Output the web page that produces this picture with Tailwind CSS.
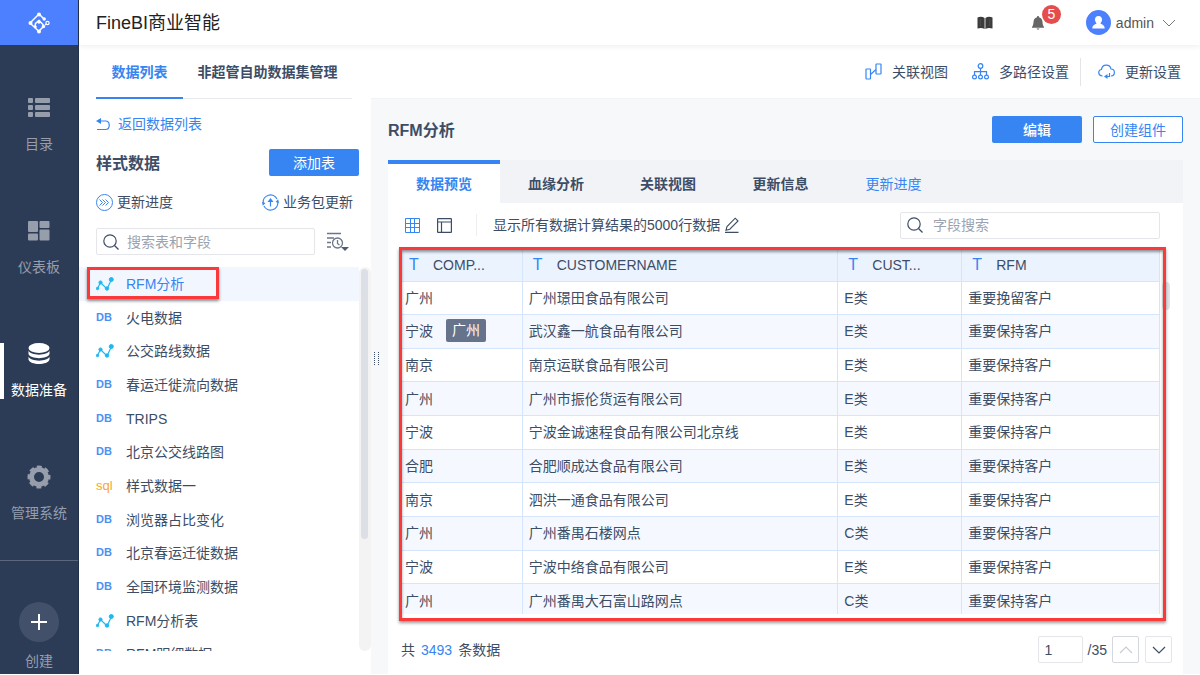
<!DOCTYPE html>
<html lang="zh-CN">
<head>
    <meta charset="UTF-8">
    <meta name="viewport" content="width=device-width, initial-scale=1.0">
    <title>FineBI商业智能</title>
    <script src="https://cdn.jsdelivr.net/npm/@tailwindcss/browser@4"></script>
    <style> body { font-family: 'Liberation Sans', 'Noto Sans CJK SC', sans-serif; } </style>
</head>
<body class="h-screen pb-px flex overflow-hidden bg-white text-sm text-[#3d4d66]">

    <!-- SIDEBAR -->
    <aside class="w-[79px] shrink-0 flex flex-col bg-[#2c3b56] border-r border-[#22304c] text-[#969eac]">
        <a href="#" aria-label="首页" class="h-[45px] shrink-0 flex items-center justify-center bg-[#4c80ff]">
            <svg class="w-[22px] h-[22px]" viewBox="0 0 22 22" fill="none" stroke="#fff" stroke-width="1.5">
                <path d="M10 3L3 10M3 12L11 19.500M12 3L16 7M17 13L19.500 11M7 14.500L7.500 11.500L11 8.500L15 12.500V15L11 19"/>
                <g fill="#fff" stroke="none">
                    <circle cx="11" cy="2.500" r="2"/><circle cx="2.500" cy="11" r="2"/><circle cx="11" cy="19.500" r="2"/>
                    <circle cx="16.200" cy="7" r="1.700"/><circle cx="7.300" cy="14.800" r="1.500"/><circle cx="11" cy="10" r="1.700"/><circle cx="15.500" cy="14.500" r="1.700"/>
                </g>
                <circle cx="19.500" cy="11" r="1.600" fill="#4c80ff" stroke-width="1.200"/>
            </svg>
        </a>
        <nav class="h-[516px] shrink-0 pt-[18px] pb-1 flex flex-col border-b border-[#5a667b]">
            <a href="#" class="flex-1 flex flex-col items-center justify-center gap-3.5">
                <svg class="w-6 h-6" viewBox="0 0 24 24" fill="currentColor">
                    <rect x="1" y="2" width="5" height="5" rx="1"/><rect x="8" y="2" width="15" height="5" rx="1"/>
                    <rect x="1" y="9" width="5" height="5" rx="1"/><rect x="8" y="9" width="15" height="5" rx="1"/>
                    <rect x="1" y="16" width="5" height="5" rx="1"/><rect x="8" y="16" width="15" height="5" rx="1"/>
                </svg>
                <span class="leading-5">目录</span>
            </a>
            <a href="#" class="flex-1 flex flex-col items-center justify-center gap-3.5">
                <svg class="w-6 h-6" viewBox="0 0 24 24" fill="currentColor">
                    <rect x="1" y="2" width="10" height="11" rx="1"/><rect x="12.500" y="2" width="10" height="7" rx="1"/>
                    <rect x="1" y="14.500" width="10" height="7" rx="1"/><rect x="12.500" y="10.500" width="10" height="11" rx="1"/>
                </svg>
                <span class="leading-5">仪表板</span>
            </a>
            <a href="#" class="relative flex-1 flex flex-col items-center justify-center gap-3.5 text-white">
                <span class="absolute left-0 top-1/2 -translate-y-1/2 w-1 h-14 bg-white"></span>
                <svg class="w-6 h-6" viewBox="0 0 24 24" fill="currentColor">
                    <ellipse cx="12" cy="6" rx="10.500" ry="5"/>
                    <path d="M1.500 8.500C3 14 21 14 22.500 8.500V12C21 17.500 3 17.500 1.500 12Z"/>
                    <path d="M1.500 14.500C3 20 21 20 22.500 14.500V17.500C21 23.500 3 23.500 1.500 17.500Z"/>
                </svg>
                <span class="leading-5">数据准备</span>
            </a>
            <a href="#" class="flex-1 flex flex-col items-center justify-center gap-3.5">
                <svg class="w-6 h-6" viewBox="0 0 24 24">
                    <circle cx="12" cy="12" r="7.500" fill="none" stroke="currentColor" stroke-width="5"/>
                    <circle cx="12" cy="12" r="10" fill="none" stroke="currentColor" stroke-width="3" stroke-dasharray="4.800 3.054" stroke-dashoffset="2.400"/>
                </svg>
                <span class="leading-5">管理系统</span>
            </a>
        </nav>
        <button type="button" class="pt-[41px] flex flex-col items-center gap-[9px]">
            <span class="w-10 h-10 rounded-full bg-[#435069] flex items-center justify-center">
                <svg class="w-4 h-4" viewBox="0 0 16 16" stroke="#fff" stroke-width="2"><path d="M8 0V16M0 8H16"/></svg>
            </span>
            <span class="leading-5">创建</span>
        </button>
    </aside>

    <div class="flex-1 min-w-0 flex flex-col">
        <!-- HEADER -->
        <header class="relative h-[45px] shrink-0 pl-[17px] pr-6 flex items-center bg-white shadow-[0_1px_6px_rgba(0,0,0,0.08)]">
            <h1 class="text-lg text-[#222]">FineBI商业智能</h1>
            <div class="ml-auto flex items-center">
                <button type="button" aria-label="帮助文档">
                    <svg class="w-4 h-4" viewBox="0 0 16 16" fill="#3b3b3b">
                        <path d="M.5 2.500C3 1.300 5.500 1.500 7.600 3V14C5.500 12.700 3 12.600.5 13.600Z"/>
                        <path d="M15.500 2.500C13 1.300 10.500 1.500 8.400 3V14C10.500 12.700 13 12.600 15.500 13.600Z"/>
                        <path d="M3.200 4V11M12.800 4V11" stroke="#666" stroke-width=".5"/>
                    </svg>
                </button>
                <button type="button" aria-label="消息" class="relative ml-[37px]">
                    <svg class="w-4 h-4" viewBox="0 0 16 16" fill="#666">
                        <path d="M8 1C8.700 1 9 1.500 9 2.200C11.500 2.800 12.300 4.800 12.500 7C12.700 9.500 13 10.500 14 12V12.800H2V12C3 10.500 3.300 9.500 3.500 7C3.700 4.800 4.500 2.800 7 2.200C7 1.500 7.300 1 8 1ZM6.500 13.600H9.500C9.300 15 6.700 15 6.500 13.600Z"/>
                    </svg>
                    <span class="absolute left-3 -top-2.5 w-[19px] h-[19px] rounded-full bg-[#e64c4c] text-white text-sm leading-[19px] text-center">5</span>
                </button>
                <button type="button" class="ml-10 flex items-center text-[#555]">
                    <svg class="w-[25px] h-[25px]" viewBox="0 0 25 25">
                        <circle cx="12.500" cy="12.500" r="12.500" fill="#4c80ff"/>
                        <path fill="#fff" d="M12.500 6C15 6 16.200 7.800 16 10C15.900 11.400 15.200 12.500 14.400 13.200C15.500 14.500 18.700 14.600 18.700 18.500H6.300C6.300 14.600 9.500 14.500 10.600 13.200C9.800 12.500 9.100 11.400 9 10C8.800 7.800 10 6 12.500 6Z"/>
                    </svg>
                    <span class="ml-[5px]">admin</span>
                    <svg class="ml-2 w-3.5 h-3.5" viewBox="0 0 14 14" fill="none" stroke="#777"><path d="M1 4L7 10L13 4"/></svg>
                </button>
            </div>
        </header>

        <div class="flex-1 min-h-0 flex">
            <!-- TABLE LIST -->
            <section class="w-[292px] shrink-0 flex flex-col">
                <div class="ml-[17px] mr-[19px] h-[54px] shrink-0 flex border-b border-[#e8eaed] font-bold">
                    <a href="#" class="w-[87px] h-[54px] pt-0.5 flex items-center justify-center border-b-2 border-[#3685f2] text-[#3685f2]">数据列表</a>
                    <a href="#" class="flex-1 flex items-center justify-center whitespace-nowrap">非超管自助数据集管理</a>
                </div>
                <div class="pl-[17px] pr-3 pt-[15px]">
                    <a href="#" class="flex items-center gap-2 leading-5 text-[#3685f2]">
                        <svg class="w-3.5 h-3.5" viewBox="0 0 14 14" fill="none" stroke="currentColor" stroke-width="1.200">
                            <path d="M2 4H9.500C14.500 4 14.500 12.500 9.500 12.500H1"/><path d="M0 4L5 1V7Z" fill="currentColor" stroke="none"/>
                        </svg>
                        返回数据列表
                    </a>
                    <div class="mt-[15px] flex items-center justify-between">
                        <h2 class="pt-0.5 text-base font-bold">样式数据</h2>
                        <button type="button" class="w-[90px] h-[27px] rounded-xs bg-[#3685f2] text-white">添加表</button>
                    </div>
                    <div class="mt-4 pr-1.5 flex justify-between leading-5">
                        <button type="button" class="flex items-center gap-1">
                            <svg class="w-[17px] h-[17px]" viewBox="0 0 17 17" fill="none" stroke="#3685f2">
                                <circle cx="8.500" cy="8.500" r="8"/><path d="M3.500 5.500L6.500 8.500L3.500 11.500M6.500 5.500L9.500 8.500L6.500 11.500M9.500 5.500L12.500 8.500L9.500 11.500"/>
                            </svg>
                            更新进度
                        </button>
                        <button type="button" class="flex items-center gap-1">
                            <svg class="w-[17px] h-[17px]" viewBox="0 0 17 17" fill="none" stroke="#3685f2" stroke-width="1.200">
                                <path d="M1.200 9A7.300 7.300 0 0 1 15 5M15.800 8A7.300 7.300 0 0 1 2 12M8.500 12.500V6"/>
                                <path d="M5.500 8L8.500 4L11.500 8ZM0 8L3.500 9L.8 11.800ZM17 9L13.500 8L16.200 5.200Z" fill="#3685f2" stroke="none"/>
                            </svg>
                            业务包更新
                        </button>
                    </div>
                    <div class="mt-4 flex items-center">
                        <label class="w-[219px] h-[27px] pl-1.5 flex items-center gap-2 border border-[#e4e6ea] rounded-xs">
                            <svg class="w-4 h-4 shrink-0" viewBox="0 0 16 16" fill="none" stroke="#3d4d66" stroke-width="1.200"><circle cx="7" cy="7" r="6.200"/><path d="M11.500 11.500L15.500 15.500"/></svg>
                            <input type="text" aria-label="搜索表和字段" placeholder="搜索表和字段" class="w-full outline-none placeholder:text-[#9ba3b0]">
                        </label>
                        <button type="button" aria-label="排序" class="ml-3">
                            <svg class="w-[22px] h-[19px]" viewBox="0 0 22 19" fill="none" stroke="#6b7687" stroke-width="1.300">
                                <path d="M0 1.500H14M0 6H7M0 10.500H4M0 15H4"/><circle cx="10.500" cy="11" r="5"/><path d="M10.500 8V11.500L12.500 13"/>
                                <path d="M14 15H22L18 19Z" fill="#4d5c75" stroke="none"/>
                            </svg>
                        </button>
                    </div>
                </div>
                <div class="relative mt-3 h-[384px] flex">
                    <ul id="table-list" class="flex-1 h-full overflow-hidden"></ul>
                    <div class="w-3 py-0.5 px-0.5 rounded-md bg-[#f3f3f4]"><div class="w-[7px] h-[270px] rounded-full bg-[#dcdfe5]"></div></div>
                    <div class="absolute left-2 top-0 w-[132px] h-8 border-3 border-[#fa3a3a] shadow-[0_2px_3px_rgba(0,0,0,0.45)] pointer-events-none"></div>
                </div>
            </section>

            <div class="flex-1 min-w-0 flex flex-col">
                <div class="h-[54px] shrink-0 pr-[19px] flex items-center justify-end border-b border-[#f2f3f5]">
                    <a href="#" class="flex items-center gap-2.5">
                        <svg class="w-[17px] h-[17px]" viewBox="0 0 17 17" fill="none" stroke="#3685f2" stroke-width="1.200"><rect x="1" y="6" width="4.500" height="10" rx=".5"/><rect x="11" y="1" width="5" height="10" rx=".5"/><path d="M5.500 11.500L11 6.500"/></svg>
                        关联视图
                    </a>
                    <a href="#" class="ml-6 flex items-center gap-2.5">
                        <svg class="w-[17px] h-[17px]" viewBox="0 0 17 17" fill="none" stroke="#3685f2" stroke-width="1.200"><circle cx="8.500" cy="3" r="2.300"/><circle cx="2.500" cy="14" r="1.900"/><circle cx="8.500" cy="14" r="1.900"/><circle cx="14.500" cy="14" r="1.900"/><path d="M8.500 5.300V12M2.500 12V8.700H14.500V12"/></svg>
                        多路径设置
                    </a>
                    <span class="mx-[11px] w-px h-7 bg-[#e3e5e9]"></span>
                    <a href="#" class="ml-1.5 flex items-center gap-2.5">
                        <svg class="w-[17px] h-[17px]" viewBox="0 0 17 17" fill="none" stroke="#3685f2" stroke-width="1.200"><path d="M4.500 13C-.5 12.500-.2 6.700 3.500 6.500C4.200 .8 12 .8 13 6C17.500 6.200 17.500 12.500 13 13M11.500 10V13.500H8"/><path d="M6 13.500L9.500 11V16Z" fill="#3685f2" stroke="none"/></svg>
                        更新设置
                    </a>
                </div>

                <!-- DATASET DETAIL -->
                <main class="flex-1 min-h-0 relative pl-[17px] pr-[17px] pt-[17px] flex flex-col bg-[#f7f8fa]">
                    <svg class="absolute left-[3px] top-[253px] w-[5px] h-[14px]" viewBox="0 0 5 14" stroke="#3d4d66" stroke-width="1" stroke-dasharray="1 1"><path d="M.5 0V14M4.500 0V14"/></svg>
                    <div class="flex items-center gap-[11px]">
                        <h2 class="mr-auto pt-0.5 text-base font-bold">RFM分析</h2>
                        <button type="button" class="w-[90px] h-[27px] rounded-xs bg-[#3685f2] text-white font-medium">编辑</button>
                        <button type="button" class="w-[90px] h-[27px] rounded-xs border border-[#3685f2] bg-white text-[#3685f2]">创建组件</button>
                    </div>
                    <nav class="mt-[17px] h-[43px] shrink-0 flex bg-[#f2f3f7] font-bold">
                        <a href="#" class="w-28 flex items-center justify-center bg-white border-t-4 border-[#3685f2] text-[#3685f2]">数据预览</a>
                        <a href="#" class="w-28 pt-1 flex items-center justify-center">血缘分析</a>
                        <a href="#" class="w-28 pt-1 flex items-center justify-center">关联视图</a>
                        <a href="#" class="w-[113px] pt-1 flex items-center justify-center">更新信息</a>
                        <a href="#" class="w-[113px] pt-1 flex items-center justify-center font-normal text-[#3685f2]">更新进度</a>
                    </nav>
                    <div class="flex-1 min-h-0 flex flex-col bg-white">
                        <div class="h-[44px] shrink-0 pl-[17px] pr-[23px] flex items-center">
                            <button type="button" aria-label="表格视图">
                                <svg class="w-[15px] h-[15px]" viewBox="0 0 15 15" fill="none" stroke="#3685f2"><path d="M.5.5H14.500V14.500H.5ZM5.500.5V14.500M9.500.5V14.500M.5 5.500H14.500M.5 9.500H14.500"/></svg>
                            </button>
                            <button type="button" aria-label="字段视图" class="ml-[17px]">
                                <svg class="w-[15px] h-[15px]" viewBox="0 0 15 15" fill="none" stroke="#3d4d66" stroke-width="1.200"><rect x=".6" y=".6" width="13.800" height="13.800" rx=".5"/><path d="M.5 4H14.500M4.500 4V14.500"/></svg>
                            </button>
                            <span class="mx-4 ml-6 w-px h-[22px] bg-[#eceef1]"></span>
                            <span class="whitespace-nowrap">显示所有数据计算结果的5000行数据</span>
                            <button type="button" aria-label="编辑行数" class="ml-1">
                                <svg class="w-4 h-4" viewBox="0 0 16 16" fill="none" stroke="#3d4d66" stroke-width="1.100"><path d="M2 13.200L3 9.500L11.200 1.200L14 4L5.800 12.200ZM1 15.400H14.500"/></svg>
                            </button>
                            <label class="ml-auto w-[260px] h-[27px] pl-1.5 flex items-center gap-2.5 border border-[#e4e6ea] rounded-xs">
                                <svg class="w-4 h-4 shrink-0" viewBox="0 0 16 16" fill="none" stroke="#3d4d66" stroke-width="1.200"><circle cx="7" cy="7" r="6.200"/><path d="M11.500 11.500L15.500 15.500"/></svg>
                                <input type="text" aria-label="字段搜索" placeholder="字段搜索" class="w-full outline-none placeholder:text-[#9ba3b0]">
                            </label>
                        </div>
                        <div class="relative ml-[11px] mr-[17px] h-[374px] shrink-0">
                            <div class="h-[367px] pt-[3px] pr-1.5 overflow-hidden">
                                <table class="w-full h-[368px] table-fixed border-collapse text-left">
                                    <colgroup><col class="w-[16.2%]"><col class="w-[41.5%]"><col class="w-[16.3%]"><col class="w-[26%]"></colgroup>
                                    <thead>
                                        <tr class="h-[31px] bg-[#ebf3ff]">
                                            <th class="pl-2.5 font-normal border-r border-b border-[#d5e5fb]"><span class="inline-block w-6 text-base leading-5 text-[#3685f2]">T</span>COMP...</th>
                                            <th class="pl-2.5 font-normal border-r border-b border-[#d5e5fb]"><span class="inline-block w-6 text-base leading-5 text-[#3685f2]">T</span>CUSTOMERNAME</th>
                                            <th class="pl-2.5 font-normal border-r border-b border-[#d5e5fb]"><span class="inline-block w-6 text-base leading-5 text-[#3685f2]">T</span>CUST...</th>
                                            <th class="pl-2.5 font-normal border-r border-b border-[#d5e5fb]"><span class="inline-block w-6 text-base leading-5 text-[#3685f2]">T</span>RFM</th>
                                        </tr>
                                    </thead>
                                    <tbody id="data-rows"></tbody>
                                </table>
                            </div>
                            <div class="absolute -right-1 top-[35px] w-2 h-7 rounded-full bg-[#e2e4e8]"></div>
                            <div class="absolute inset-0 border-3 border-[#fa3a3a] shadow-[0_2px_3px_rgba(0,0,0,0.4),inset_0_2px_3px_rgba(0,0,0,0.4)] pointer-events-none"></div>
                            <!-- Hover tip -->
                            <div class="absolute left-[47px] top-[72px] px-1.5 rounded-xs bg-[#66738a] text-white leading-[23px]">广州</div>
                        </div>
                        <div class="pl-[13px] pr-[11px] pt-[15px] flex items-center">
                            <span>共</span><span class="mx-1.5 text-[#3685f2]">3493</span><span>条数据</span>
                            <input type="text" value="1" aria-label="页码" class="ml-auto w-[45px] h-[27px] pl-1.5 border border-[#e4e6ea] rounded-xs outline-none">
                            <span class="mx-[5px]">/35</span>
                            <button type="button" aria-label="上一页" class="w-[27px] h-[27px] flex items-center justify-center border border-[#d4d8de] rounded-xs">
                                <svg class="w-3.5 h-3.5" viewBox="0 0 14 14" fill="none" stroke="#c8cdd5" stroke-width="1.200"><path d="M1 10L7 4L13 10"/></svg>
                            </button>
                            <button type="button" aria-label="下一页" class="ml-1.5 w-[27px] h-[27px] flex items-center justify-center border border-[#e4e6ea] rounded-xs">
                                <svg class="w-3.5 h-3.5" viewBox="0 0 14 14" fill="none" stroke="#3d4d66" stroke-width="1.200"><path d="M1 4L7 10L13 4"/></svg>
                            </button>
                        </div>
                    </div>
                </main>
            </div>
        </div>
    </div>

    <script>
        const tables = [
            ['flow', 'RFM分析'], ['db', '火电数据'], ['flow', '公交路线数据'], ['db', '春运迁徙流向数据'],
            ['db', 'TRIPS'], ['db', '北京公交线路图'], ['sql', '样式数据一'], ['db', '浏览器占比变化'],
            ['db', '北京春运迁徙数据'], ['db', '全国环境监测数据'], ['flow', 'RFM分析表'], ['db', 'RFM明细数据'],
        ];
        const icons = {
            db: '<span class="text-[11px] font-bold text-[#4b91f4]">DB</span>',
            sql: '<span class="text-[13px] text-[#f9a52b]">sql</span>',
            flow: `<svg class="w-[18px] h-[14px]" viewBox="0 0 18 14" fill="#1fb8ef" stroke="#1fb8ef">
                <path d="M1.500 11.500L4.500 5.500L11 12L15.500 2.500" fill="none" stroke-width="1.200"/>
                <circle cx="1.500" cy="11.500" r="1.200"/><circle cx="4.500" cy="5.500" r="1.600"/><circle cx="11" cy="11.500" r="1.700"/><circle cx="15.300" cy="2.500" r="2"/>
            </svg>`,
        };
        document.getElementById('table-list').innerHTML = '<li class="h-[404px] flex flex-col">' + tables.map(([type, name], i) => `
            <a href="#" class="flex-1 pl-[17px] flex items-center ${i === 0 ? 'bg-[#f2f7ff] text-[#3685f2]' : ''}">
                <span class="w-[30px] flex items-center">${icons[type]}</span>${name}
            </a>`).join('') + '</li>';

        const rows = [
            ['广州', '广州璟田食品有限公司', 'E类', '重要挽留客户'],
            ['宁波', '武汉鑫一航食品有限公司', 'E类', '重要保持客户'],
            ['南京', '南京运联食品有限公司', 'E类', '重要保持客户'],
            ['广州', '广州市振伦货运有限公司', 'E类', '重要保持客户'],
            ['宁波', '宁波金诚速程食品有限公司北京线', 'E类', '重要保持客户'],
            ['合肥', '合肥顺成达食品有限公司', 'E类', '重要保持客户'],
            ['南京', '泗洪一通食品有限公司', 'E类', '重要保持客户'],
            ['广州', '广州番禺石楼网点', 'C类', '重要保持客户'],
            ['宁波', '宁波中络食品有限公司', 'E类', '重要保持客户'],
            ['广州', '广州番禺大石富山路网点', 'C类', '重要保持客户'],
        ];
        document.getElementById('data-rows').innerHTML = rows.map(row => `
            <tr class="even:bg-[#f5f9ff]">
                ${row.map(cell => `<td class="pl-1.5 border-r border-b border-[#d5e5fb]">${cell}</td>`).join('')}
            </tr>`).join('');
    </script>
</body>
</html>
